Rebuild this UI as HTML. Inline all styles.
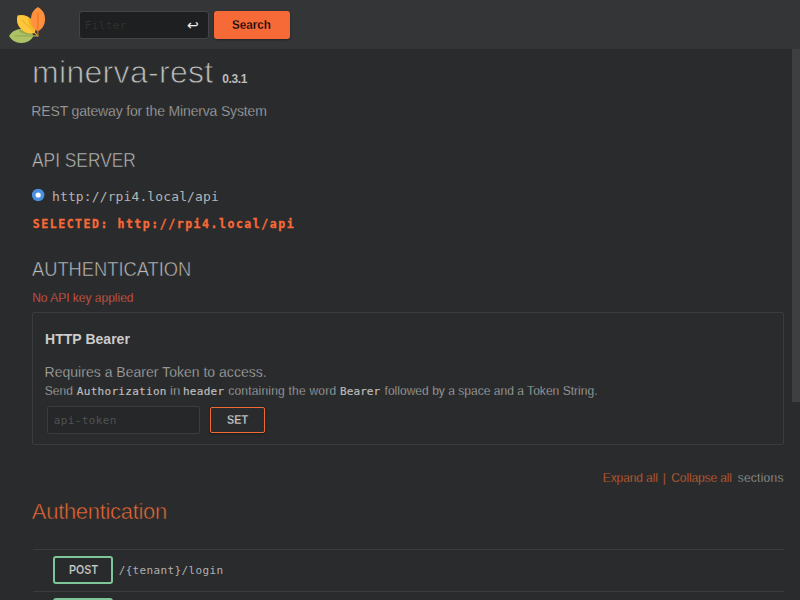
<!DOCTYPE html>
<html lang="en"><head><meta charset="utf-8"><title>minerva-rest</title>
<style>
*{box-sizing:border-box}
html,body{margin:0;padding:0;width:800px;height:600px;overflow:hidden;background:#2a2b2c}
body{position:relative;font-family:"Liberation Sans",sans-serif;color:#bbb}
.a{position:absolute}
.t{position:absolute;white-space:nowrap;transform-origin:0 50%}
header{position:absolute;left:0;top:0;width:800px;height:49px;background:#343536}
header svg{position:absolute;left:9px;top:7px;width:36px;height:36px}
.filterbox{left:79px;top:11px;width:130px;height:28px;background:#1e1f20;border:1px solid #434445;border-radius:3px}
.searchbtn{left:214px;top:11px;width:76px;height:28px;background:#f66a38;border-radius:3px;box-shadow:0 1px 3px rgba(0,0,0,.12),0 1px 2px rgba(0,0,0,.24)}
.sb{left:792px;top:49px;width:8px;height:353px;background:#3e3f41}
.radio{left:28px;top:185px;width:20px;height:20px}
.authbox{left:32px;top:312px;width:752px;height:133px;border:1px solid #3b3c3d;border-radius:2px}
.tokbox{left:47px;top:406px;width:153px;height:28px;background:#262728;border:1px solid #3b3c3d;border-radius:2px}
.setbtn{left:210px;top:407px;width:55px;height:26px;border:1px solid #f06a35;border-radius:2px;box-shadow:0 1px 3px rgba(0,0,0,.12),0 1px 2px rgba(0,0,0,.24)}
.hr{left:33px;width:751px;height:1px;background:#3b3c3d}
.method{left:53px;width:60px;height:28px;border:2px solid #7ec699;border-radius:3px;background:#282a2b}
</style></head><body>
<header>
<svg viewBox="1 0 511 512">
  <path d="M351 411a202 202 0 01-350 0 203 203 0 01333-24 203 203 0 0117 24zm0 0" fill="#adc165"/>
  <path d="M334 387a202 202 0 01-216-69 202 202 0 01216 69zm78 32H85a8 8 0 01-8-8 8 8 0 018-8h327a8 8 0 017 8 8 8 0 01-7 8zm0 0" fill="#99aa52"/>
  <path d="M374 338l-5 30a202 202 0 01-248-248 203 203 0 01253 218zm0 0" fill="#ffc73b"/>
  <path d="M374 338a202 202 0 01-100-197 203 203 0 01100 197zm38 81l-6-2-231-231a8 8 0 0111-11l231 230a8 8 0 01-5 14zm0 0" fill="#efb025"/>
  <path d="M311 175c0 75 40 140 101 175a202 202 0 000-350 202 202 0 00-101 175zm0 0" fill="#ff903e"/>
  <path d="M412 419a8 8 0 01-8-8V85a8 8 0 0115 0v326a8 8 0 01-7 8zm0 0" fill="#e87425"/>
</svg>
</header>
<div class="a filterbox"></div>
<div class="t" style="left:187px;top:14.6px;font:400 14px/20px 'DejaVu Sans',sans-serif;color:#eee">&#x21a9;</div>
<div class="a searchbtn"></div>
<div class="a sb"></div>
<svg class="a radio" viewBox="0 0 20 20"><circle cx="10.15" cy="10" r="6.25" fill="#4a8fe0"/><circle cx="10.15" cy="10" r="2.6" fill="#fff"/></svg>
<div class="a authbox"></div>
<div class="a tokbox"></div>
<div class="a setbtn"></div>
<div class="a hr" style="top:549px"></div>
<div class="a hr" style="top:591px"></div>
<div class="a method" style="top:556px"></div>
<div class="a method" style="top:598px"></div>
<div class='t' id='filter' style='left:84.75px;top:16.00px;font:400 11px/20px "DejaVu Sans Mono", "Liberation Mono", monospace;letter-spacing:0.387px;color:rgba(187,187,187,.13)'>Filter</div>
<div class='t' id='search' style='left:232.44px;top:15.00px;font:700 13px/20px "Liberation Sans", sans-serif;color:#000;transform:scaleX(0.8968);-webkit-text-stroke:0.26px #f66a38'>Search</div>
<div class='t' id='title' style='left:32.00px;top:62.00px;font:400 32px/20px "Liberation Sans", sans-serif;letter-spacing:0.310px;color:#bbb;-webkit-text-stroke:0.80px #2a2b2c'>minerva-rest</div>
<div class='t' id='ver' style='left:222.17px;top:69.00px;font:700 12px/20px "Liberation Sans", sans-serif;letter-spacing:-0.366px;color:#bbb'>0.3.1</div>
<div class='t' id='desc' style='left:31.35px;top:101.00px;font:400 14px/20px "Liberation Sans", sans-serif;letter-spacing:-0.161px;color:#bbb;-webkit-text-stroke:0.35px #2a2b2c'>REST gateway for the Minerva System</div>
<div class='t' id='apiserver' style='left:31.60px;top:150.00px;font:400 20px/20px "Liberation Sans", sans-serif;color:#bbb;transform:scaleX(0.8674);-webkit-text-stroke:0.50px #2a2b2c'>API SERVER</div>
<div class='t' id='url' style='left:52.00px;top:187.00px;font:400 13px/20px "DejaVu Sans Mono", "Liberation Mono", monospace;letter-spacing:0.120px;color:#b4b4b4'>http://rpi4.local/api</div>
<div class='t' id='selected' style='left:32.79px;top:214.00px;font:700 11.5px/20px "DejaVu Sans Mono", "Liberation Mono", monospace;letter-spacing:1.540px;color:#f66a38;-webkit-text-stroke:0.3px #f66a38'>SELECTED: http://rpi4.local/api</div>
<div class='t' id='authn' style='left:31.50px;top:259.00px;font:400 20px/20px "Liberation Sans", sans-serif;color:#bbb;transform:scaleX(0.9146);-webkit-text-stroke:0.50px #2a2b2c'>AUTHENTICATION</div>
<div class='t' id='nokey' style='left:32.16px;top:288.00px;font:400 12px/20px "Liberation Sans", sans-serif;letter-spacing:-0.004px;color:#f2614c;-webkit-text-stroke:0.30px #2a2b2c'>No API key applied</div>
<div class='t' id='httpbearer' style='left:45.09px;top:329.00px;font:700 14px/20px "Liberation Sans", sans-serif;letter-spacing:0.022px;color:#ccc'>HTTP Bearer</div>
<div class='t' id='requires' style='left:44.60px;top:362.00px;font:400 14px/20px "Liberation Sans", sans-serif;letter-spacing:0.015px;color:#bbb;-webkit-text-stroke:0.35px #2a2b2c'>Requires a Bearer Token to access.</div>
<div class='t' id='send1' style='left:44.79px;top:381.00px;font:400 12px/20px "Liberation Sans", sans-serif;letter-spacing:0.055px;color:#bbb;-webkit-text-stroke:0.30px #2a2b2c'>Send</div>
<div class='t' id='send2' style='left:76.82px;top:382.00px;font:400 11px/20px "DejaVu Sans Mono", "Liberation Mono", monospace;letter-spacing:0.299px;color:#bcbcbc;-webkit-text-stroke:0.2px #bcbcbc'>Authorization</div>
<div class='t' id='send3' style='left:169.82px;top:381.00px;font:400 12px/20px "Liberation Sans", sans-serif;color:#bbb;transform:scaleX(1.1066);-webkit-text-stroke:0.30px #2a2b2c'>in</div>
<div class='t' id='send4' style='left:182.90px;top:382.00px;font:400 11px/20px "DejaVu Sans Mono", "Liberation Mono", monospace;letter-spacing:0.308px;color:#bcbcbc;-webkit-text-stroke:0.2px #bcbcbc'>header</div>
<div class='t' id='send5' style='left:228.20px;top:381.00px;font:400 12px/20px "Liberation Sans", sans-serif;letter-spacing:0.211px;color:#bbb;-webkit-text-stroke:0.30px #2a2b2c'>containing the word</div>
<div class='t' id='send6' style='left:340.06px;top:382.00px;font:400 11px/20px "DejaVu Sans Mono", "Liberation Mono", monospace;letter-spacing:0.075px;color:#bcbcbc;-webkit-text-stroke:0.2px #bcbcbc'>Bearer</div>
<div class='t' id='send7' style='left:384.52px;top:381.00px;font:400 12px/20px "Liberation Sans", sans-serif;letter-spacing:0.028px;color:#bbb;-webkit-text-stroke:0.30px #2a2b2c'>followed by a space and a Token String.</div>
<div class='t' id='apitoken' style='left:53.66px;top:411.00px;font:400 11px/20px "DejaVu Sans Mono", "Liberation Mono", monospace;letter-spacing:0.381px;color:rgba(187,187,187,.3)'>api-token</div>
<div class='t' id='set' style='left:226.96px;top:410.00px;font:700 13px/20px "Liberation Sans", sans-serif;color:#ccc;transform:scaleX(0.8290);-webkit-text-stroke:0.26px #2a2b2c'>SET</div>
<div class='t' id='expand' style='left:602.81px;top:468.00px;font:400 12px/20px "Liberation Sans", sans-serif;letter-spacing:-0.108px;color:#e2662f;-webkit-text-stroke:0.30px #2a2b2c'>Expand all</div>
<div class='t' id='bar' style='left:662.86px;top:468.00px;font:400 12px/20px "Liberation Sans", sans-serif;letter-spacing:0.000px;color:#e2662f;-webkit-text-stroke:0.30px #2a2b2c'>|</div>
<div class='t' id='collapse' style='left:671.29px;top:468.00px;font:400 12px/20px "Liberation Sans", sans-serif;letter-spacing:-0.119px;color:#e2662f;-webkit-text-stroke:0.30px #2a2b2c'>Collapse all</div>
<div class='t' id='sections' style='left:737.64px;top:468.00px;font:400 12px/20px "Liberation Sans", sans-serif;letter-spacing:0.252px;color:#aaa;-webkit-text-stroke:0.30px #2a2b2c'>sections</div>
<div class='t' id='authh' style='left:31.85px;top:502.00px;font:400 22px/20px "Liberation Sans", sans-serif;letter-spacing:-0.311px;color:#ee6a36;-webkit-text-stroke:0.55px #2a2b2c'>Authentication</div>
<div class='t' id='post' style='left:68.70px;top:560.00px;font:700 12px/20px "Liberation Sans", sans-serif;color:#ccc;transform:scaleX(0.8833);-webkit-text-stroke:0.24px #2a2b2c'>POST</div>
<div class='t' id='path' style='left:118.66px;top:561.00px;font:400 11px/20px "DejaVu Sans Mono", "Liberation Mono", monospace;letter-spacing:0.361px;color:#b0b0b0'>/{tenant}/login</div>
</body></html>
